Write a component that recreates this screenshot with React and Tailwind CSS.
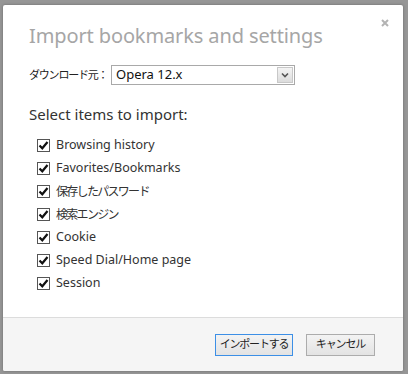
import React from "react";

const items = [
  { t: "Browsing history", jp: false },
  { t: "Favorites/Bookmarks", jp: false },
  { t: "保存したパスワード", jp: true },
  { t: "検索エンジン", jp: true },
  { t: "Cookie", jp: false },
  { t: "Speed Dial/Home page", jp: false },
  { t: "Session", jp: false },
];

function Check() {
  return (
    <span className="w-[13px] h-[13px] border border-[#555] bg-white flex items-center justify-center shrink-0">
      <svg width="11" height="11" viewBox="0 0 11 11">
        <path d="M1.5 5.5 L4.3 8.3 L9.5 2" fill="none" stroke="#111" strokeWidth="2.2" />
      </svg>
    </span>
  );
}

export default function App() {
  const font = { fontFamily: '"Noto Sans", "Noto Sans CJK JP", sans-serif' };
  return (
    <div className="w-[408px] h-[374px] bg-[#969696] overflow-hidden pt-[5px] pl-[3px]" style={font}>
      <div className="relative w-[400px] h-[366px] bg-white rounded-[2px] flex flex-col shadow-[0_0_3px_rgba(0,0,0,0.3)]">
        <button className="absolute right-[13px] top-[13px] w-[10px] h-[10px] flex items-center justify-center">
          <svg width="8" height="8" viewBox="0 0 8 8">
            <path d="M1 1 L7 7 M7 1 L1 7" stroke="#b3b3b3" strokeWidth="2" />
          </svg>
        </button>
        <div className="flex-1 pl-[26px] pt-[17px]">
          <div className="text-[20px] leading-[28px] text-[#a6a6a6] whitespace-nowrap tracking-[-0.12px]">
            Import bookmarks and settings
          </div>
          <div className="mt-[15px] flex items-center h-[20px]">
            <span className="text-[11px] tracking-[-1.2px] text-[#222] w-[82px] whitespace-nowrap">ダウンロード元：</span>
            <div className="w-[184px] h-[20px] border border-[#a9a9a9] flex items-center justify-between pl-[4px] pr-[1px]">
              <span className="text-[13px] text-[#111]">Opera 12.x</span>
              <span className="w-[16px] h-[16px] border border-[#c8c8c8] bg-gradient-to-b from-[#f4f4f4] to-[#dcdcdc] flex items-center justify-center">
                <svg width="8" height="6" viewBox="0 0 8 6">
                  <path d="M1 1.5 L4 4.5 L7 1.5" fill="none" stroke="#555" strokeWidth="1.6" />
                </svg>
              </span>
            </div>
          </div>
          <div className="mt-[19px] text-[15px] leading-[20px] text-[#333]">Select items to import:</div>
          <div className="mt-[10px] pl-[8px] flex flex-col">
            {items.map((it) => (
              <div key={it.t} className="h-[23px] flex items-center gap-[6px]">
                <Check />
                <span
                  className={
                    it.jp
                      ? "text-[12px] tracking-[-1.7px] text-[#333] whitespace-nowrap"
                      : "text-[12.5px] text-[#333] whitespace-nowrap"
                  }
                >
                  {it.t}
                </span>
              </div>
            ))}
          </div>
        </div>
        <div className="h-[54px] border-t border-[#dcdcdc] bg-[#f5f5f5] flex items-center justify-end gap-[13px] pr-[28px] rounded-b-[2px]">
          <button className="h-[22px] w-[78px] border border-[#3c8fe6] bg-gradient-to-b from-[#f3f3f3] to-[#e3e3e3] text-[11px] tracking-[-1.2px] text-[#222] flex items-center justify-center whitespace-nowrap">
            インポートする
          </button>
          <button className="h-[22px] w-[69px] border border-[#acacac] bg-gradient-to-b from-[#f3f3f3] to-[#e3e3e3] text-[11px] tracking-[-1.1px] text-[#222] flex items-center justify-center whitespace-nowrap">
            キャンセル
          </button>
        </div>
      </div>
    </div>
  );
}
